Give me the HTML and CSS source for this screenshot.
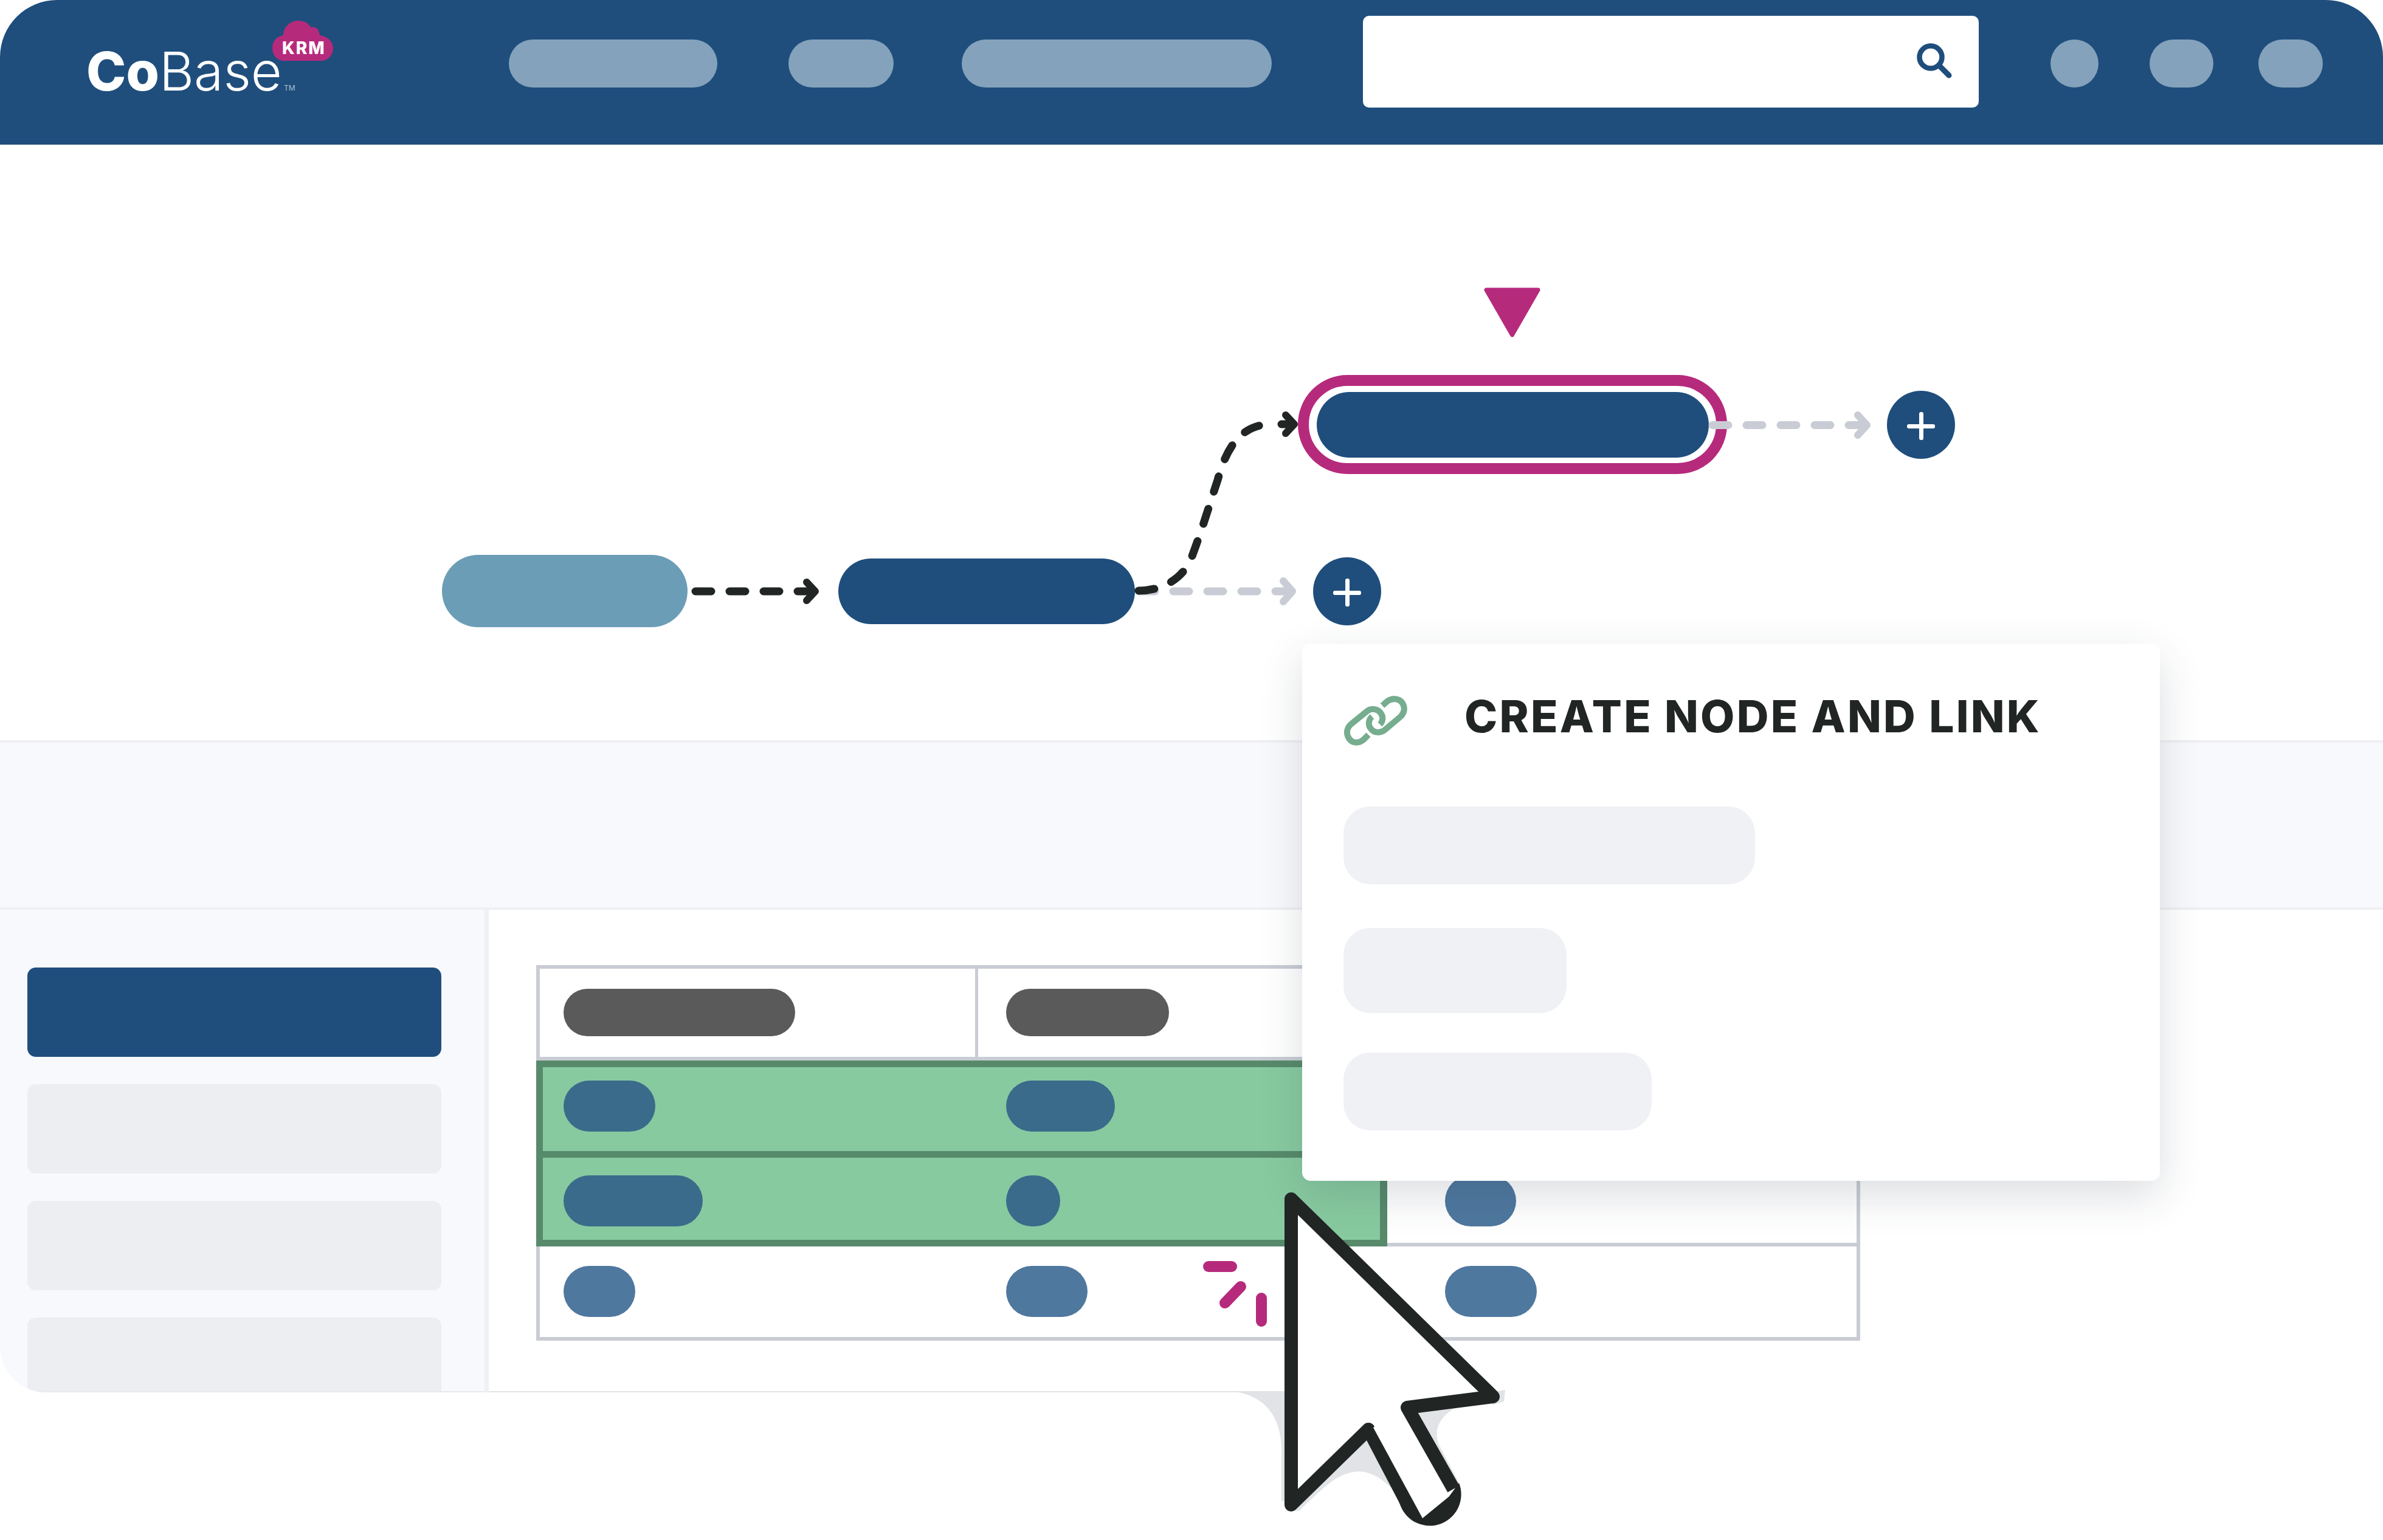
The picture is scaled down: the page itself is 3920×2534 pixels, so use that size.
FILE: index.html
```html
<!DOCTYPE html>
<html lang="en">
<head>
    <meta charset="UTF-8">
    <meta name="viewport" content="width=device-width, initial-scale=1.0">
    <title>CoBase KRM</title>
    <link rel="stylesheet" href="styles.css">
</head>
<body>

    <div class="app">
        <header class="topbar">
            <div class="logo">
                <span class="logo-word"><b>Co</b>Base</span><span class="logo-tm">TM</span>
                <span class="logo-badge">
                    <svg viewBox="0 0 100 67" class="logo-cloud"><path d="M20 66C8 66 0 57 0 45C0 33 8 26 18 24C18 10 30 0 43 0C53 0 60 5 63 11C71 9 77 14 78 24C90 26 100 34 100 45C100 57 91 66 80 66Z"/></svg>
                    <span class="logo-krm">KRM</span>
                </span>
            </div>
            <nav class="nav">
                <span class="nav-pill nav-a"></span>
                <span class="nav-pill nav-b"></span>
                <span class="nav-pill nav-c"></span>
            </nav>
            <div class="search">
                <svg class="search-icon" viewBox="0 0 100 100"><circle cx="46" cy="42" r="18.5" fill="none" stroke="#1f4e7d" stroke-width="8.5"/><path d="M62 58L76 72" stroke="#1f4e7d" stroke-width="9" stroke-linecap="round"/></svg>
            </div>
            <div class="actions">
                <span class="nav-pill act-a"></span>
                <span class="nav-pill act-b"></span>
                <span class="nav-pill act-c"></span>
            </div>
        </header>

        <section class="diagram">
            <div class="node node-light"></div>
            <div class="node node-first"></div>
            <div class="node-ring"><div class="node node-selected"></div></div>
            <button class="add add-upper"></button>
            <button class="add add-lower"></button>
            <svg class="edges" viewBox="0 238 3920 980">
                <path class="marker" d="M2445 477H2530L2487.5 551Z"/>
                <path class="dash dash-grey" d="M2817 699.5H3071"/>
                <path class="head head-grey" d="M3056 683L3071 699.5L3056 716"/>
                <path class="dash dash-grey" d="M1874 973H2126"/>
                <path class="head head-grey" d="M2111 956L2126 973L2111 990"/>
                <path class="dash dash-dark" d="M1144 973H1338"/>
                <path class="head head-dark" d="M1327 958L1341 973L1327 988"/>
                <path class="dash dash-dark" d="M1873 972C1905 972 1940 958 1958 923C1978 870 1988 835 2003 790C2015 745 2035 706 2078 699"/>
                <path class="dash dash-dark" d="M2108 698H2124"/>
                <path class="head head-dark" d="M2115 683L2129 698L2115 713"/>
            </svg>
        </section>

        <section class="band"></section>

        <section class="workspace">
            <aside class="sidebar">
                <div class="side-item side-active"></div>
                <div class="side-item"></div>
                <div class="side-item"></div>
                <div class="side-item side-cut"></div>
            </aside>
            <main class="content">
                <div class="grid">
                    <div class="row row-head">
                        <div class="cell"><span class="pill pill-head w-381"></span></div>
                        <div class="cell cell-mid"><span class="pill pill-head w-268"></span></div>
                        <div class="cell"></div>
                    </div>
                    <div class="row row-one">
                        <div class="cell hl hl-left"><span class="pill pill-hl w-151"></span></div>
                        <div class="cell hl hl-right"><span class="pill pill-hl w-179"></span></div>
                        <div class="cell"></div>
                    </div>
                    <div class="row row-two">
                        <div class="cell hl hl-left"><span class="pill pill-hl w-229"></span></div>
                        <div class="cell hl hl-right"><span class="pill pill-hl w-89"></span></div>
                        <div class="cell cell-ruled"><span class="pill w-117"></span></div>
                    </div>
                    <div class="row row-three">
                        <div class="cell"><span class="pill w-118"></span></div>
                        <div class="cell"><span class="pill w-134"></span></div>
                        <div class="cell"><span class="pill w-151"></span></div>
                    </div>
                </div>
            </main>
        </section>

        <div class="popup">
            <div class="popup-head">
                <svg class="link-icon" viewBox="0 0 130 110">
                    <path d="M51 79L43 87C35 94 24 93 19 85C14 77 15 68 23 61L49 40C56 35 66 36 71 43C76 49 75 57 70 62"/>
                    <path d="M74 31L82 24C90 18 102 19 107 27C112 35 110 44 103 50L78 71C71 77 60 76 55 69C50 63 51 54 57 49"/>
                </svg>
                <span class="popup-title">CREATE NODE AND LINK</span>
            </div>
            <div class="field field-a"></div>
            <div class="field field-b"></div>
            <div class="field field-c"></div>
        </div>
    </div>

    <svg class="pointer" viewBox="0 0 3920 2534">
        <g class="shade">
            <path d="M2020 2289C2075 2292 2112 2325 2108 2400V2470H2124V2289Z"/>
            <path d="M2130 2486L2246 2362L2290 2450C2270 2428 2245 2418 2228 2422C2200 2425 2180 2445 2137 2486Z"/>
            <path d="M2325 2320L2395 2316C2370 2330 2358 2350 2366 2375L2400 2440L2385 2440Z"/>
            <path d="M2455 2290L2476 2287L2474 2306L2455 2312Z"/>
        </g>
        <g class="sparks">
            <path d="M1988 2084H2026"/>
            <path d="M2041 2117L2015 2144"/>
            <path d="M2075 2136V2174"/>
        </g>
        <path class="arrow" d="M2391 2450L2315 2316L2456 2298L2124 1973V2476L2251 2352L2316 2476"/>
        <path class="arrow-cap" d="M2304 2478A50 50 0 0 0 2400 2440L2384 2462L2340 2498L2322 2462L2300 2468Z"/>
        <path class="arrow-fill" d="M2259 2349L2340 2498L2384 2462L2302 2318Z"/>
    </svg>

</body>
</html>
```

FILE: styles.css
```css
html, body {
    margin: 0;
    height: 100%;
    background-color: #ffffff;
    overflow: hidden;
}
body {
    position: relative;
    font-family: Inter, "Liberation Sans", sans-serif;
}

.app {
    position: relative;
    height: 2291px;
    border-radius: 94px 94px 75px 75px;
    overflow: hidden;
}

/* top bar */
.topbar {
    display: flex;
    align-items: center;
    height: 238px;
    padding: 0 99px 29px 144px;
    box-sizing: border-box;
    background-color: #1f4e7d;
}
.logo {
    position: relative;
    width: 693px;
    height: 100%;
    color: #ffffff;
}
.logo-word {
    position: absolute;
    left: -2px;
    top: 62px;
    font-size: 88px;
    font-weight: 300;
    line-height: 110px;
}
.logo-word b {
    font-weight: 800;
}
.logo-tm {
    position: absolute;
    left: 323px;
    top: 137px;
    font-size: 12px;
    color: #a9c1d3;
}
.logo-badge {
    position: absolute;
    left: 304px;
    top: 34px;
    width: 100px;
    height: 67px;
}
.logo-cloud {
    display: block;
    width: 100%;
    height: 100%;
    fill: #b62a7c;
}
.logo-krm {
    position: absolute;
    left: 16px;
    top: 31px;
    font-size: 28px;
    font-weight: 800;
    line-height: 28px;
    letter-spacing: 2px;
}
.nav, .actions {
    display: flex;
    align-items: center;
}
.nav-pill {
    display: block;
    height: 79px;
    border-radius: 40px;
    background-color: #84a2bb;
}
.nav-a { width: 343px; margin-right: 117px; }
.nav-b { width: 173px; margin-right: 112px; }
.nav-c { width: 510px; margin-right: 150px; }
.act-a { width: 79px; margin-right: 84px; }
.act-b { width: 105px; margin-right: 74px; }
.act-c { width: 106px; }

.search {
    display: flex;
    align-items: center;
    justify-content: flex-end;
    width: 1013px;
    height: 151px;
    margin-top: -6px;
    margin-right: 118px;
    padding-right: 25px;
    box-sizing: border-box;
    border-radius: 10px;
    background-color: #ffffff;
}
.search-icon {
    width: 100px;
    height: 100px;
}

/* diagram */
.diagram {
    position: relative;
    height: 980px;
}
.edges {
    position: absolute;
    left: 0;
    top: 0;
    width: 3920px;
    height: 980px;
}
.marker {
    fill: #b62a7c;
    stroke: #b62a7c;
    stroke-width: 7;
    stroke-linejoin: round;
}
.dash {
    fill: none;
    stroke-width: 13;
    stroke-linecap: round;
    stroke-dasharray: 26 30;
}
.head {
    fill: none;
    stroke-width: 12;
    stroke-linecap: round;
    stroke-linejoin: round;
}
.dash-grey, .head-grey { stroke: #c9ccd4; }
.dash-dark, .head-dark { stroke: #212524; }
.node {
    position: absolute;
    border-radius: 60px;
}
.node-light {
    left: 727px;
    top: 675px;
    width: 404px;
    height: 119px;
    background-color: #6c9db6;
}
.node-first {
    left: 1379px;
    top: 681px;
    width: 488px;
    height: 108px;
    background-color: #1f4e7d;
}
.node-ring {
    position: absolute;
    left: 2135px;
    top: 379px;
    width: 706px;
    height: 163px;
    box-sizing: border-box;
    border: 18px solid #b62a7c;
    border-radius: 82px;
    background-color: #ffffff;
}
.node-selected {
    left: 13px;
    top: 10px;
    width: 645px;
    height: 108px;
    background-color: #1f4e7d;
}
.add {
    position: absolute;
    width: 112px;
    height: 112px;
    padding: 0;
    border: none;
    border-radius: 50%;
    background-color: #1f4e7d;
}
.add::before, .add::after {
    content: "";
    position: absolute;
    background-color: #ffffff;
    border-radius: 3px;
}
.add::before {
    left: 33px;
    top: 55px;
    width: 46px;
    height: 7px;
}
.add::after {
    left: 53px;
    top: 35px;
    width: 7px;
    height: 46px;
}
.add-upper { left: 3104px; top: 405px; }
.add-lower { left: 2160px; top: 679px; }

/* band under the diagram */
.band {
    height: 279px;
    box-sizing: border-box;
    border-top: 4px solid #eff0f3;
    border-bottom: 4px solid #eff0f3;
    background-color: #f8f9fc;
}

/* lower workspace */
.workspace {
    display: flex;
    height: 794px;
}
.sidebar {
    display: flex;
    flex-direction: column;
    gap: 45px;
    width: 804px;
    height: 100%;
    padding: 95px 71px 0 45px;
    box-sizing: border-box;
    border-right: 7px solid #f0f1f4;
    border-bottom: 2px solid #e8e9ec;
    background-color: #f8f9fc;
}
.side-item {
    flex: none;
    height: 147px;
    border-radius: 14px;
    background-color: #edeef2;
}
.side-active {
    background-color: #1f4e7d;
}
.side-cut {
    height: 121px;
    border-radius: 14px 14px 0 0;
}
.content {
    flex: 1;
    padding: 91px 0 0 78px;
    /* the bottom edge only shows left of the cursor */
    background: linear-gradient(to right, #e4e5e8 1280px, transparent 1280px) left bottom / 100% 2px no-repeat #ffffff;
}
.grid {
    width: 2178px;
    box-sizing: border-box;
    border: 6px solid #c9ccd4;
}
.row {
    display: grid;
    grid-template-columns: 722px 678px 1fr;
    margin-left: -6px;
    box-sizing: border-box;
}
.cell {
    box-sizing: border-box;
    padding-left: 51px;
}
.cell:first-child {
    padding-left: 45px;
}
.cell:last-child {
    padding-left: 95px;
}
.row-head {
    height: 151px;
    border-bottom: 6px solid #c9ccd4;
}
.row-head .cell {
    padding-top: 33px;
}
.cell-mid {
    border-left: 5px solid #c9ccd4;
}
.row-head .cell-mid {
    padding-left: 46px;
}
.hl {
    background-color: #88caa0;
    border: 0 solid #578a6b;
}
.hl-left {
    border-left-width: 11px;
    padding-left: 34px !important;
}
.hl-right {
    border-right-width: 12px;
}
.row-one {
    height: 160px;
}
.row-one .hl {
    border-top-width: 11px;
    border-bottom-width: 11px;
    padding-top: 22px;
}
.row-two {
    height: 146px;
}
.row-two .hl {
    border-bottom-width: 11px;
    padding-top: 29px;
}
.cell-ruled {
    padding-top: 29px;
    border-bottom: 6px solid #c9ccd4;
}
.row-three {
    height: 149px;
}
.row-three .cell {
    padding-top: 32px;
}

.pill {
    display: block;
    height: 84px;
    border-radius: 42px;
    background-color: #4f789f;
}
.pill-head {
    height: 78px;
    border-radius: 39px;
    background-color: #5a5a5a;
}
.pill-hl {
    background-color: #3a6b8b;
}
.w-89 { width: 89px; }
.w-117 { width: 117px; }
.w-118 { width: 118px; }
.w-134 { width: 134px; }
.w-151 { width: 151px; }
.w-179 { width: 179px; }
.w-229 { width: 229px; }
.w-268 { width: 268px; }
.w-381 { width: 381px; }

/* create node popup */
.popup {
    position: absolute;
    left: 2142px;
    top: 1059px;
    width: 1411px;
    height: 884px;
    padding: 0 68px;
    box-sizing: border-box;
    border-radius: 14px;
    background-color: #ffffff;
    box-shadow: 0 24px 70px rgba(40, 50, 70, 0.16);
}
.popup-head {
    display: flex;
    align-items: center;
    height: 268px;
    padding-bottom: 29px;
    box-sizing: border-box;
}
.link-icon {
    flex: none;
    width: 130px;
    height: 110px;
    margin: 13px 79px 0 -10px;
    fill: none;
    stroke: #76ad8f;
    stroke-width: 10;
}
.popup-title {
    font-size: 73px;
    font-weight: 800;
    line-height: 80px;
    letter-spacing: 3.2px;
    color: #212524;
    white-space: nowrap;
}
.field {
    border-radius: 44px;
    background-color: #f0f1f4;
}
.field-a { width: 677px; height: 128px; }
.field-b { width: 367px; height: 140px; margin-top: 72px; }
.field-c { width: 507px; height: 128px; margin-top: 65px; }

/* cursor over everything */
.pointer {
    position: absolute;
    left: 0;
    top: 0;
    width: 3920px;
    height: 2534px;
}
.shade {
    fill: #e1e3e6;
}
.sparks path {
    fill: none;
    stroke: #b62a7c;
    stroke-width: 18;
    stroke-linecap: round;
}
.arrow {
    fill: #ffffff;
    stroke: #212524;
    stroke-width: 22;
    stroke-linejoin: round;
    stroke-linecap: butt;
}
.arrow-cap {
    fill: #212524;
}
.arrow-fill {
    fill: #ffffff;
}
```
